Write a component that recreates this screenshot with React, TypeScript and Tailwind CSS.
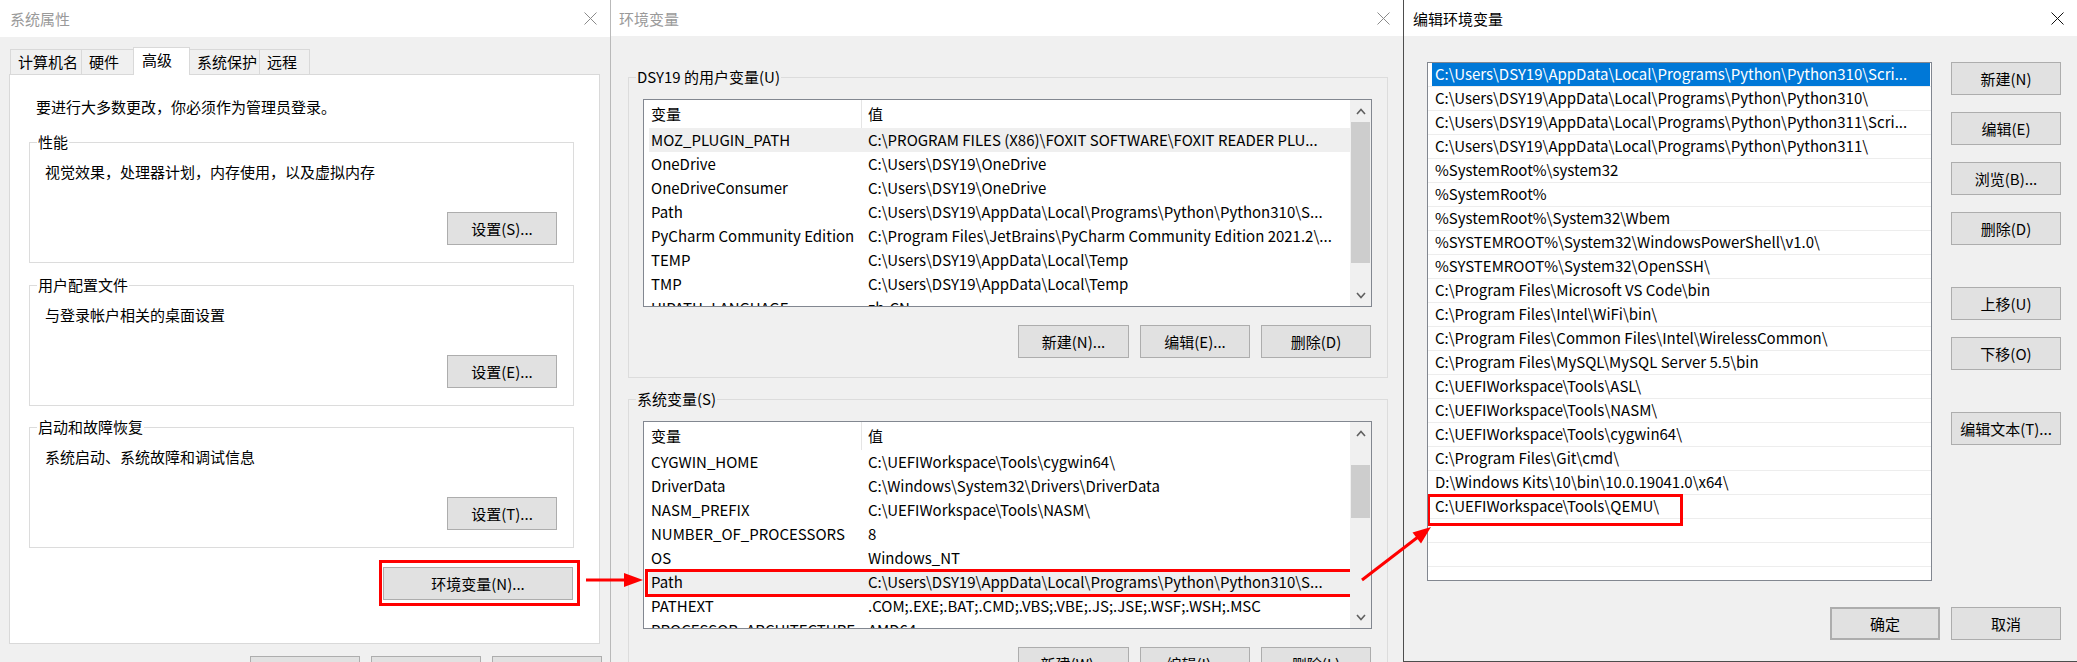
import React from 'react'

function CloseIcon({ color }: { color: string }) {
    return (
        <svg width="13" height="13" viewBox="0 0 13 13" className="shrink-0">
            <path d="M0.5 0.5L12.5 12.5M12.5 0.5L0.5 12.5" stroke={color} strokeWidth="1" fill="none" />
        </svg>
    )
}

function Chevron({ up }: { up?: boolean }) {
    return (
        <svg width="10" height="7" viewBox="0 0 10 7">
            <polyline
                points={up ? '1,6 5,1.5 9,6' : '1,1 5,5.5 9,1'}
                stroke="#606060"
                strokeWidth="1.6"
                fill="none"
            />
        </svg>
    )
}

function Button({ children, className = '' }: { children: React.ReactNode; className?: string }) {
    return (
        <div
            className={`flex h-[33px] w-[110px] shrink-0 items-center justify-center border border-[#adadad] bg-[#e1e1e1] text-[15px] leading-none text-black ${className}`}
        >
            {children}
        </div>
    )
}

function TitleBar({ title, active, className = '' }: { title: string; active?: boolean; className?: string }) {
    return (
        <div className={`flex shrink-0 items-center justify-between bg-white ${className}`}>
            <span className={`text-[15px] leading-none ${active ? 'text-black' : 'text-[#9a9a9a]'}`}>{title}</span>
            <CloseIcon color={active ? '#111111' : '#8a8a8a'} />
        </div>
    )
}

/* ---------------- 系统属性 ---------------- */

const tabs = [
    { label: '计算机名', w: 'w-[72px]' },
    { label: '硬件', w: 'w-[53px]' },
    { label: '高级', w: 'w-[57px]', active: true },
    { label: '系统保护', w: 'w-[71px]' },
    { label: '远程', w: 'w-[51px]' },
]

function Group({ title, desc, button }: { title: string; desc: string; button: string }) {
    return (
        <fieldset className="ml-[19px] flex w-[545px] flex-col border border-[#dcdcdc]">
            <legend className="ml-[7px] px-[1px] text-[15px] leading-[20px]">{title}</legend>
            <div className="ml-[15px] mt-[10px] h-[20px] text-[15px] leading-[20px]">{desc}</div>
            <Button className="mb-[17px] mr-[16px] mt-[30px] w-[109px] self-end">{button}</Button>
        </fieldset>
    )
}

function SystemProps() {
    return (
        <div className="flex h-full w-[610px] shrink-0 flex-col">
            <TitleBar title="系统属性" className="h-[37px] pl-[10px] pr-[13px]" />
            <div className="flex flex-1 flex-col bg-[#f0f0f0] pl-[9px] pr-[10px] pt-[10px]">
                <div className="ml-[1px] flex h-[27px] items-end">
                    {tabs.map((t) =>
                        t.active ? (
                            <div
                                key={t.label}
                                className={`relative z-10 -mb-px -ml-px flex h-[28px] items-center border border-b-0 border-[#d9d9d9] bg-white pl-[8px] pb-[3px] text-[15px] ${t.w}`}
                            >
                                {t.label}
                            </div>
                        ) : (
                            <div
                                key={t.label}
                                className={`-ml-px flex h-[25px] items-center border border-b-0 border-[#d9d9d9] bg-[#f0f0f0] pl-[7px] text-[15px] first:ml-0 ${t.w}`}
                            >
                                {t.label}
                            </div>
                        ),
                    )}
                </div>
                <div className="flex h-[570px] shrink-0 flex-col border border-[#d9d9d9] bg-white pt-[22px]">
                    <div className="ml-[26px] h-[20px] text-[15px] leading-[20px]">要进行大多数更改，你必须作为管理员登录。</div>
                    <div className="mt-[15px]">
                        <Group title="性能" desc="视觉效果，处理器计划，内存使用，以及虚拟内存" button="设置(S)..." />
                    </div>
                    <div className="mt-[12px]">
                        <Group title="用户配置文件" desc="与登录帐户相关的桌面设置" button="设置(E)..." />
                    </div>
                    <div className="mt-[11px]">
                        <Group title="启动和故障恢复" desc="系统启动、系统故障和调试信息" button="设置(T)..." />
                    </div>
                    <div className="relative mr-[26px] mt-[19px] self-end">
                        <Button className="w-[190px]">环境变量(N)...</Button>
                        <span className="pointer-events-none absolute -bottom-[6px] -left-[4px] -right-[7px] -top-[7px] border-[3px] border-[#ff0000]" />
                    </div>
                </div>
                <div className="-mr-[2px] mt-[12px] flex justify-end gap-[11px]">
                    <Button>确定</Button>
                    <Button>取消</Button>
                    <Button>应用(A)</Button>
                </div>
            </div>
        </div>
    )
}

/* ---------------- 环境变量 ---------------- */

type Row = { name: string; value: string; hl?: boolean; boxed?: boolean }

const userVars: Row[] = [
    { name: 'MOZ_PLUGIN_PATH', value: 'C:\\PROGRAM FILES (X86)\\FOXIT SOFTWARE\\FOXIT READER PLU...', hl: true },
    { name: 'OneDrive', value: 'C:\\Users\\DSY19\\OneDrive' },
    { name: 'OneDriveConsumer', value: 'C:\\Users\\DSY19\\OneDrive' },
    { name: 'Path', value: 'C:\\Users\\DSY19\\AppData\\Local\\Programs\\Python\\Python310\\S...' },
    { name: 'PyCharm Community Edition', value: 'C:\\Program Files\\JetBrains\\PyCharm Community Edition 2021.2\\...' },
    { name: 'TEMP', value: 'C:\\Users\\DSY19\\AppData\\Local\\Temp' },
    { name: 'TMP', value: 'C:\\Users\\DSY19\\AppData\\Local\\Temp' },
    { name: 'UIPATH_LANGUAGE', value: 'zh-CN' },
]

const sysVars: Row[] = [
    { name: 'CYGWIN_HOME', value: 'C:\\UEFIWorkspace\\Tools\\cygwin64\\' },
    { name: 'DriverData', value: 'C:\\Windows\\System32\\Drivers\\DriverData' },
    { name: 'NASM_PREFIX', value: 'C:\\UEFIWorkspace\\Tools\\NASM\\' },
    { name: 'NUMBER_OF_PROCESSORS', value: '8' },
    { name: 'OS', value: 'Windows_NT' },
    { name: 'Path', value: 'C:\\Users\\DSY19\\AppData\\Local\\Programs\\Python\\Python310\\S...', hl: true, boxed: true },
    { name: 'PATHEXT', value: '.COM;.EXE;.BAT;.CMD;.VBS;.VBE;.JS;.JSE;.WSF;.WSH;.MSC' },
    { name: 'PROCESSOR_ARCHITECTURE', value: 'AMD64' },
]

function VarList({ rows, thumbGap, thumbH }: { rows: Row[]; thumbGap: string; thumbH: string }) {
    return (
        <div className="ml-[14px] mr-[15px] mt-[12px] flex h-[208px] border border-[#828790] bg-white">
            <div className="flex-1 overflow-hidden pl-[5px]">
                <div className="flex h-[28px] items-center text-[15px]">
                    <div className="flex h-full w-[213px] items-center border-r border-[#e5e5e5] pl-[2px]">变量</div>
                    <div className="pl-[6px]">值</div>
                </div>
                {rows.map((r) => (
                    <div
                        key={r.name}
                        className={`relative flex h-[24px] items-center whitespace-nowrap text-[15px] ${r.hl ? 'bg-[#efefef]' : ''}`}
                    >
                        <div className="w-[213px] shrink-0 pl-[2px]">{r.name}</div>
                        <div className="pl-[6px]">{r.value}</div>
                        {r.boxed && (
                            <span className="pointer-events-none absolute -left-[4px] -top-[1px] h-[28px] w-[710px] border-[3px] border-[#ff0000]" />
                        )}
                    </div>
                ))}
            </div>
            <div className="flex w-[21px] shrink-0 flex-col bg-[#f0f0f0]">
                <div className="flex h-[22px] items-center justify-center">
                    <Chevron up />
                </div>
                <div className={`mx-[1px] bg-[#cdcdcd] ${thumbGap} ${thumbH}`} />
                <div className="mt-auto flex h-[22px] items-center justify-center">
                    <Chevron />
                </div>
            </div>
        </div>
    )
}

function EnvVars() {
    return (
        <div className="flex h-full w-[793px] shrink-0 flex-col border-l border-[#b9b9b9]">
            <TitleBar title="环境变量" className="h-[36px] pl-[8px] pr-[13px]" />
            <div className="flex flex-1 flex-col bg-[#f0f0f0] pl-[17px] pr-[15px] pt-[31px]">
                <fieldset className="flex flex-col border border-[#dcdcdc]">
                    <legend className="ml-[7px] px-[1px] text-[15px] leading-[20px]">DSY19 的用户变量(U)</legend>
                    <VarList rows={userVars} thumbGap="mt-0" thumbH="h-[141px]" />
                    <div className="mb-[19px] mr-[16px] mt-[18px] flex justify-end gap-[11px]">
                        <Button className="w-[111px]">新建(N)...</Button>
                        <Button>编辑(E)...</Button>
                        <Button>删除(D)</Button>
                    </div>
                </fieldset>
                <fieldset className="mt-[11px] flex flex-col border border-[#dcdcdc]">
                    <legend className="ml-[7px] px-[1px] text-[15px] leading-[20px]">系统变量(S)</legend>
                    <VarList rows={sysVars} thumbGap="mt-[21px]" thumbH="h-[53px]" />
                    <div className="mb-[19px] mr-[16px] mt-[18px] flex justify-end gap-[11px]">
                        <Button className="w-[111px]">新建(W)...</Button>
                        <Button>编辑(I)...</Button>
                        <Button>删除(L)</Button>
                    </div>
                </fieldset>
            </div>
        </div>
    )
}

/* ---------------- 编辑环境变量 ---------------- */

const paths = [
    'C:\\Users\\DSY19\\AppData\\Local\\Programs\\Python\\Python310\\Scri...',
    'C:\\Users\\DSY19\\AppData\\Local\\Programs\\Python\\Python310\\',
    'C:\\Users\\DSY19\\AppData\\Local\\Programs\\Python\\Python311\\Scri...',
    'C:\\Users\\DSY19\\AppData\\Local\\Programs\\Python\\Python311\\',
    '%SystemRoot%\\system32',
    '%SystemRoot%',
    '%SystemRoot%\\System32\\Wbem',
    '%SYSTEMROOT%\\System32\\WindowsPowerShell\\v1.0\\',
    '%SYSTEMROOT%\\System32\\OpenSSH\\',
    'C:\\Program Files\\Microsoft VS Code\\bin',
    'C:\\Program Files\\Intel\\WiFi\\bin\\',
    'C:\\Program Files\\Common Files\\Intel\\WirelessCommon\\',
    'C:\\Program Files\\MySQL\\MySQL Server 5.5\\bin',
    'C:\\UEFIWorkspace\\Tools\\ASL\\',
    'C:\\UEFIWorkspace\\Tools\\NASM\\',
    'C:\\UEFIWorkspace\\Tools\\cygwin64\\',
    'C:\\Program Files\\Git\\cmd\\',
    'D:\\Windows Kits\\10\\bin\\10.0.19041.0\\x64\\',
    'C:\\UEFIWorkspace\\Tools\\QEMU\\',
    '',
    '',
    '',
]

function EditEnv() {
    return (
        <div className="flex h-full w-[674px] shrink-0 flex-col border-b border-l border-[#4d4d4d]">
            <TitleBar title="编辑环境变量" active className="h-[36px] pl-[9px] pr-[13px]" />
            <div className="flex flex-1 flex-col bg-[#f0f0f0] pl-[23px] pr-[16px] pt-[26px]">
                <div className="flex justify-between">
                    <div className="h-[519px] w-[505px] overflow-hidden border border-[#828790] bg-white">
                        {paths.map((p, i) => (
                            <div
                                key={i}
                                className="relative flex h-[24px] items-stretch whitespace-nowrap border-b border-[#ededed] text-[15px]"
                            >
                                {i === 0 ? (
                                    <div className="ml-[4px] mr-[1px] flex flex-1 items-center bg-[#0078d7] pl-[3px] text-white">{p}</div>
                                ) : (
                                    <div className="flex items-center pl-[7px]">{p}</div>
                                )}
                                {p.endsWith('QEMU\\') && (
                                    <span className="pointer-events-none absolute -left-[1px] -top-[1px] h-[32px] w-[256px] border-[3px] border-[#ff0000]" />
                                )}
                            </div>
                        ))}
                    </div>
                    <div className="flex flex-col">
                        <Button>新建(N)</Button>
                        <Button className="mt-[17px]">编辑(E)</Button>
                        <Button className="mt-[17px]">浏览(B)...</Button>
                        <Button className="mt-[17px]">删除(D)</Button>
                        <Button className="mt-[42px]">上移(U)</Button>
                        <Button className="mt-[17px]">下移(O)</Button>
                        <Button className="mt-[42px]">编辑文本(T)...</Button>
                    </div>
                </div>
                <div className="mt-[26px] flex justify-end gap-[11px]">
                    <Button className="border-2 border-[#0078d7]">确定</Button>
                    <Button>取消</Button>
                </div>
            </div>
        </div>
    )
}

function Arrows() {
    return (
        <svg className="pointer-events-none absolute left-0 top-0" width="2077" height="662" viewBox="0 0 2077 662">
            <line x1="586" y1="580" x2="627" y2="580" stroke="#ff0000" strokeWidth="3" />
            <polygon points="624,573 643,580 624,587" fill="#ff0000" />
            <line x1="1362" y1="580" x2="1418" y2="537" stroke="#ff0000" strokeWidth="3" />
            <polygon points="1421,543.5 1431,527 1412.5,532.5" fill="#ff0000" />
        </svg>
    )
}

export default function App() {
    return (
        <div className="relative flex h-[662px] w-[2077px] overflow-hidden bg-[#f0f0f0] font-['Noto_Sans_CJK_SC',sans-serif] text-black">
            <SystemProps />
            <EnvVars />
            <EditEnv />
            <Arrows />
        </div>
    )
}
